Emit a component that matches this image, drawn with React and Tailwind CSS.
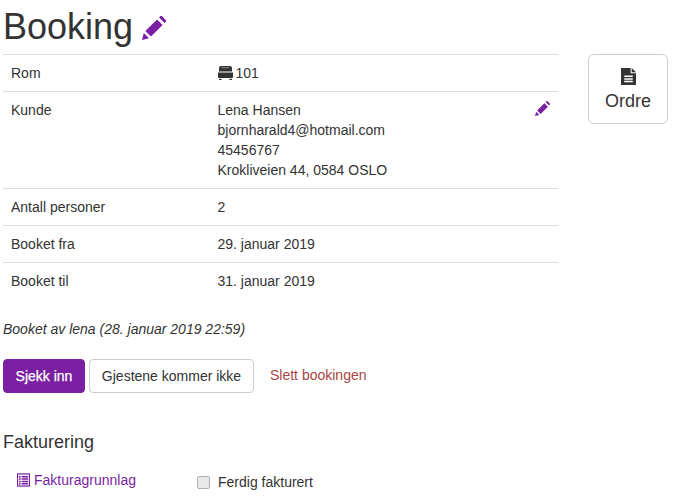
const Pencil = ({ className }) => (
  <svg viewBox="0 0 24 24" className={className} fill="#7b1fa2">
    <path d="M0 24l1.8-7 5.2 5.2z" />
    <path d="M3.4 15L15 3.4 20.6 9 9 20.6z" />
    <path d="M17 1.4L18.4 0a1 1 0 0 1 1.4 0l4.2 4.2a1 1 0 0 1 0 1.4L22.6 7z" />
  </svg>
);

const Row = ({ label, children, tall }) => (
  <div className={`flex border-t border-[#dddddd] py-2 pl-2 ${tall ? "relative" : ""}`}>
    <div className="w-[206.5px] shrink-0">{label}</div>
    <div>{children}</div>
  </div>
);

export default function App() {
  return (
    <div className="h-[504px] w-[676px] overflow-hidden bg-white pl-[3px] font-['Liberation_Sans',Arial,sans-serif] text-sm leading-5 text-[#333333]">
      <div className="flex">
        <div className="w-[555px] shrink-0">
          <h1 className="flex h-[54px] items-center gap-[9px] text-[36px] leading-[40px] font-normal">
            Booking
            <Pencil className="mt-[2px] h-6 w-6" />
          </h1>
          <div>
            <Row label="Rom">
              <span className="flex items-center gap-[3px]">
                <svg viewBox="0 0 15 14" className="h-[14px] w-[15px]" fill="#333333">
                  <path d="M1 2Q1 0 3 0h9q2 0 2 2v3.6H1z" />
                  <rect x="3.5" y="1.2" width="8" height="1" fill="#8a8a8a" />
                  <path d="M0 6.4h15V11a1 1 0 0 1-1 1H1a1 1 0 0 1-1-1z" />
                  <rect x="1" y="12.8" width="2.5" height="1.2" />
                  <rect x="11.5" y="12.8" width="2.5" height="1.2" />
                </svg>
                <span>101</span>
              </span>
            </Row>
            <Row label="Kunde" tall>
              <div>Lena Hansen</div>
              <div>bjornharald4@hotmail.com</div>
              <div>45456767</div>
              <div>Krokliveien 44, 0584 OSLO</div>
              <Pencil className="absolute top-[9px] right-[8px] h-[15px] w-[15px]" />
            </Row>
            <Row label="Antall personer">2</Row>
            <Row label="Booket fra">29. januar 2019</Row>
            <Row label="Booket til">31. januar 2019</Row>
          </div>
        </div>
        <button className="mt-[54px] ml-[30px] flex h-[70px] w-[80px] flex-col items-center rounded-md border border-[#cccccc] bg-white pt-[13px] text-lg leading-[20px]">
          <svg viewBox="1 0 14 18" className="h-[17px] w-[15px]" preserveAspectRatio="none" fill="#333333">
            <path d="M1 0h9v5.5h5V18H1zM4 8v1.6h8V8zM4 10.8v1.6h8v-1.6zM4 13.6v1.6h8v-1.6z" fillRule="evenodd" />
            <path d="M11 0l4 4.5h-4z" />
          </svg>
          <span className="mt-[6px]">Ordre</span>
        </button>
      </div>
      <p className="mt-[20px] italic">Booket av lena (28. januar 2019 22:59)</p>
      <div className="mt-[20px] flex items-center gap-1">
        <button className="h-[34px] w-[82px] rounded border border-[#7b1fa2] bg-[#7b1fa2] text-white [-webkit-text-stroke:0.25px_white]">
          Sjekk inn
        </button>
        <button className="h-[34px] w-[165px] rounded border border-[#cccccc] bg-white">Gjestene kommer ikke</button>
        <a className="mb-[2px] ml-[12px] text-[#a94442]">Slett bookingen</a>
      </div>
      <h3 className="mt-[39px] text-lg leading-5 font-normal">Fakturering</h3>
      <div className="mt-[15px] flex">
        <a className="flex w-[195px] items-center gap-[4px] pl-[14px] text-[#7b1fa2]">
          <svg viewBox="0 0 14 14" className="h-[14px] w-[13px]" fill="none" stroke="#7b1fa2">
            <rect x="0.5" y="0.5" width="13" height="13" strokeWidth="1.3" />
            <path d="M2 3.5h2M5 3.5h7M2 6h2M5 6h7M2 8.5h2M5 8.5h7M2 11h2M5 11h7" strokeWidth="1.6" />
          </svg>
          Fakturagrunnlag
        </a>
        <label className="mt-[5px] flex items-center gap-[7px]">
          <span className="-ml-px mr-px h-[13px] w-[13px] rounded-[2px] border border-[#b0b0b0] bg-[#e8e8e8]"></span>
          Ferdig fakturert
        </label>
      </div>
    </div>
  );
}
